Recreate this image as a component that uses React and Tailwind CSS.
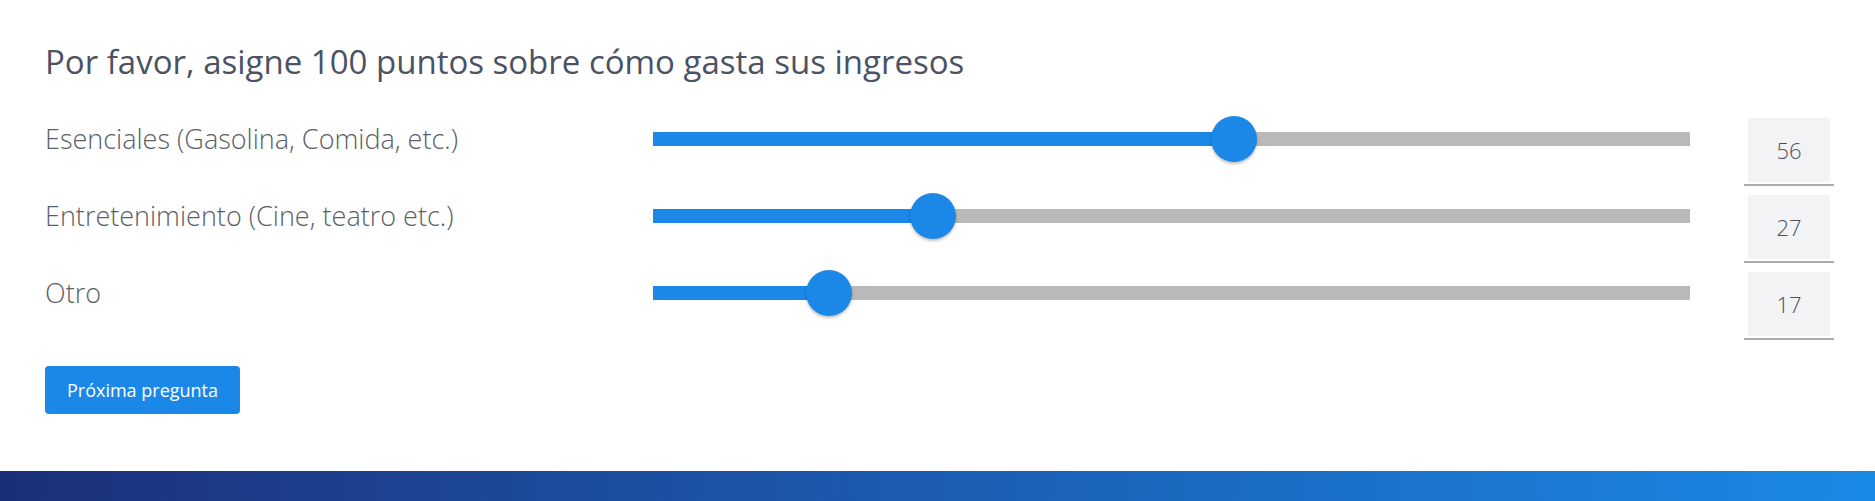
import React, { useState } from "react";

const categories = [
  { id: "esenciales", label: "Esenciales (Gasolina, Comida, etc.)", value: 56 },
  { id: "entretenimiento", label: "Entretenimiento (Cine, teatro etc.)", value: 27 },
  { id: "otro", label: "Otro", value: 17 },
];

function PointsSlider({ value, onChange }) {
  return (
    <div className="relative h-[42px] flex-1 flex items-center">
      <div className="h-[14px] w-full bg-[#b9b9b9]">
        <div className="h-full bg-[#1b88e8]" style={{ width: `${value}%` }} />
      </div>
      <div
        className="absolute top-1/2 h-[46px] w-[46px] -translate-x-1/2 -translate-y-1/2 rounded-full bg-[#1b88e8] shadow-[0_2px_3px_rgba(0,0,0,0.25)]"
        style={{ left: `${value}%` }}
      />
      <input
        type="range"
        min="0"
        max="100"
        value={value}
        onChange={(e) => onChange(Number(e.target.value))}
        className="absolute inset-0 w-full opacity-0 cursor-pointer"
      />
    </div>
  );
}

export default function App() {
  const [values, setValues] = useState(categories.map((c) => c.value));

  const setValue = (i, v) => {
    setValues((prev) => prev.map((p, j) => (j === i ? v : p)));
  };

  return (
    <div className="min-h-screen bg-white flex flex-col font-['Open_Sans',sans-serif]">
      <div className="pl-[45px] pr-[41px] pt-[40px]">
        <h1 className="text-[33px] leading-[44px] text-[#4b5263] font-normal">
          Por favor, asigne 100 puntos sobre cómo gasta sus ingresos
        </h1>

        <div className="mt-[34px] flex flex-col gap-[9px]">
          {categories.map((c, i) => (
            <div key={c.id} className="flex items-start">
              <div className="w-[608px] h-[42px] flex items-center text-[27px] font-light text-[#5b5f66]">
                {c.label}
              </div>
              <PointsSlider value={values[i]} onChange={(v) => setValue(i, v)} />
              <div className="ml-[54px] w-[90px] border-b-2 border-[#ababab] pb-[2px]">
                <div className="mx-[4px] h-[64px] bg-[#f2f3f5] flex items-center justify-center text-[22px] font-light text-[#4b4f57]">
                  {values[i]}
                </div>
              </div>
            </div>
          ))}
        </div>

        <button className="mt-[26px] h-[48px] w-[195px] rounded-[4px] bg-[#1b88e8] text-white text-[18px] font-medium">
          Próxima pregunta
        </button>
      </div>

      <div className="mt-[57px] h-[60px] bg-gradient-to-r from-[#1b2f78] via-[#1b5db3] to-[#1a8ae6]" />
    </div>
  );
}
